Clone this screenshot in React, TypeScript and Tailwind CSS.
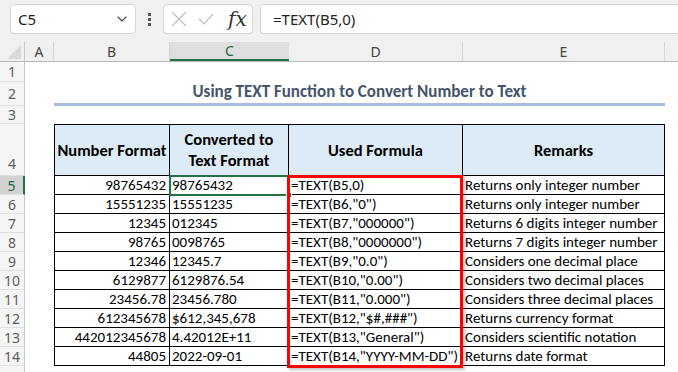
import { ChevronDown } from "lucide-react";

const rows = [
  ["98765432", "98765432", "=TEXT(B5,0)", "Returns only integer number"],
  ["15551235", "15551235", '=TEXT(B6,"0")', "Returns only integer number"],
  ["12345", "012345", '=TEXT(B7,"000000")', "Returns 6 digits integer number"],
  ["98765", "0098765", '=TEXT(B8,"0000000")', "Returns 7 digits integer number"],
  ["12346", "12345.7", '=TEXT(B9,"0.0")', "Considers one decimal place"],
  ["6129877", "6129876.54", '=TEXT(B10,"0.00")', "Considers two decimal places"],
  ["23456.78", "23456.780", '=TEXT(B11,"0.000")', "Considers three decimal places"],
  ["612345678", "$612,345,678", '=TEXT(B12,"$#,###")', "Returns currency format"],
  ["442012345678", "4.42012E+11", '=TEXT(B13,"General")', "Considers scientific notation"],
  ["44805", "2022-09-01", '=TEXT(B14,"YYYY-MM-DD")', "Returns date format"],
];

const cellFont = { fontFamily: "Carlito, Calibri, Lato, 'Liberation Sans', sans-serif" };
const uiFont = { fontFamily: "'Noto Sans', 'Open Sans', sans-serif" };

function RowHead({ n, h, active, bottom }: { n: string; h: string; active?: boolean; bottom?: boolean }) {
  return (
    <div
      className={`w-[25px] shrink-0 ${h} flex justify-center border-b border-[#e1e1e1] text-[14px] ${
        bottom ? "items-end pb-[1px]" : "items-center"
      } ${active ? "bg-[#d2d2d2] text-[#1e6b41] border-r-2 border-r-[#217346]" : "bg-[#f5f5f5] text-[#5c5c5c] border-r border-r-[#c8c8c8]"}`}
      style={uiFont}
    >
      {n}
    </div>
  );
}

export default function App() {
  return (
    <div className="w-[678px] h-[372px] overflow-hidden bg-white relative select-none">
      {/* formula bar */}
      <div className="h-[42px] bg-[#f0f0f0] flex items-start pt-[4px]">
        <div className="ml-[10px] w-[126px] h-[30px] bg-white border border-[#d6d6d6] rounded-[4px] flex items-center pl-[7px] pr-[5px]">
          <span className="text-[15px] text-[#222] flex-1" style={uiFont}>C5</span>
          <ChevronDown size={16} strokeWidth={1.6} className="text-[#444]" />
        </div>
        <div className="w-[27px] h-[30px] flex flex-col items-center justify-center gap-[2px]">
          <span className="w-[3px] h-[3px] bg-[#555]" />
          <span className="w-[3px] h-[3px] bg-[#555]" />
          <span className="w-[3px] h-[3px] bg-[#555]" />
        </div>
        <div className="w-[90px] h-[30px] bg-white border border-[#d6d6d6] rounded-[4px] flex items-center pl-[7px]">
          <svg width="16" height="16" viewBox="0 0 16 16" className="mr-[11px]">
            <path d="M1 1 L15 15 M15 1 L1 15" stroke="#bdbdbd" strokeWidth="1.2" fill="none" />
          </svg>
          <svg width="16" height="12" viewBox="0 0 16 12" className="mr-[14px]">
            <path d="M1 6 L6 11 L15 1" stroke="#bdbdbd" strokeWidth="1.2" fill="none" />
          </svg>
          <span className="text-[20px] italic text-[#333] leading-none" style={{ fontFamily: "'DejaVu Serif', 'Liberation Serif', serif" }}>
            fx
          </span>
        </div>
        <div className="ml-[7px] flex-1 h-[30px] bg-white border border-[#d6d6d6] border-r-0 rounded-l-[4px] flex items-center pl-[12px]">
          <span className="text-[15px] text-[#222]" style={uiFont}>=TEXT(B5,0)</span>
        </div>
      </div>

      {/* column header */}
      <div className="flex h-[20px] bg-[#f0f0f0] border-b border-[#b8b8b8] text-[14px] text-[#444]" style={uiFont}>
        <div className="w-[25px] shrink-0 border-r border-[#c8c8c8] relative">
          <svg width="14" height="14" viewBox="0 0 14 14" className="absolute right-[3px] bottom-[2px]">
            <polygon points="14,0 14,14 0,14" fill="#d9d9d9" />
          </svg>
        </div>
        <div className="w-[29px] shrink-0 border-r border-[#d4d4d4] flex items-center justify-center">A</div>
        <div className="w-[116px] shrink-0 border-r border-[#d4d4d4] flex items-center justify-center">B</div>
        <div className="w-[119px] shrink-0 bg-[#dedede] border-b-2 border-[#217346] text-[#1e6b41] flex items-center justify-center">C</div>
        <div className="w-[174px] shrink-0 border-r border-[#d4d4d4] flex items-center justify-center">D</div>
        <div className="w-[202px] shrink-0 border-r border-[#d4d4d4] flex items-center justify-center">E</div>
        <div className="flex-1" />
      </div>

      {/* sheet */}
      <div className="flex flex-col" style={cellFont}>
        <div className="flex">
          <RowHead n="1" h="h-[20px]" />
        </div>
        <div className="flex">
          <RowHead n="2" h="h-[24px]" />
          <div className="w-[29px] shrink-0" />
          <div className="w-[611px] shrink-0 h-[24px] border-b-[3px] border-[#a9bce2] flex items-end justify-center pb-[3px] text-[17px] leading-none font-extrabold text-[#44546a]">
            Using TEXT Function to Convert Number to Text
          </div>
        </div>
        <div className="flex">
          <RowHead n="3" h="h-[18px]" />
        </div>
        <div className="flex">
          <RowHead n="4" h="h-[52px]" bottom />
          <div className="w-[29px] shrink-0" />
          <div className="flex h-[52px] bg-[#ddebf7] border-t border-l border-black text-[16.5px] font-bold text-black text-center leading-[21px]">
            <div className="w-[115px] border-r border-b border-black flex items-center justify-center whitespace-nowrap">Number Format</div>
            <div className="w-[119px] border-r border-b border-black flex items-center justify-center">
              Converted to<br />Text Format
            </div>
            <div className="w-[174px] border-r border-b border-black flex items-center justify-center">Used Formula</div>
            <div className="w-[202px] border-r border-b border-black flex items-center justify-center">Remarks</div>
          </div>
        </div>
        {rows.map((r, i) => (
          <div className="flex" key={i}>
            <RowHead n={String(i + 5)} h="h-[19px]" active={i === 0} />
            <div className="w-[29px] shrink-0" />
            <div className="flex h-[19px] border-l border-black text-[15px] text-black leading-none">
              <div className="w-[115px] border-r border-b border-black flex items-center justify-end pr-[3px]">{r[0]}</div>
              <div className="w-[119px] border-r border-b border-black flex items-center pl-[2px]">{r[1]}</div>
              <div className="w-[174px] border-r border-b border-black flex items-center pl-[2px]">{r[2]}</div>
              <div className="w-[202px] border-r border-b border-black flex items-center pl-[2px] whitespace-nowrap">{r[3]}</div>
            </div>
          </div>
        ))}
        <div className="flex">
          <RowHead n="" h="h-[20px]" />
        </div>
      </div>

      {/* selection on C5 */}
      <div className="absolute left-[169px] top-[175px] w-[121px] h-[21px] border-2 border-[#217346]" />
      <div className="absolute left-[286px] top-[192px] w-[6px] h-[6px] bg-[#217346] border border-white" />

      {/* red range box D5:D14 */}
      <div className="absolute left-[287px] top-[175px] w-[176px] h-[193px] border-[3px] border-[#ff0000] shadow-[2px_2px_3px_rgba(0,0,0,0.25)]" />
    </div>
  );
}
